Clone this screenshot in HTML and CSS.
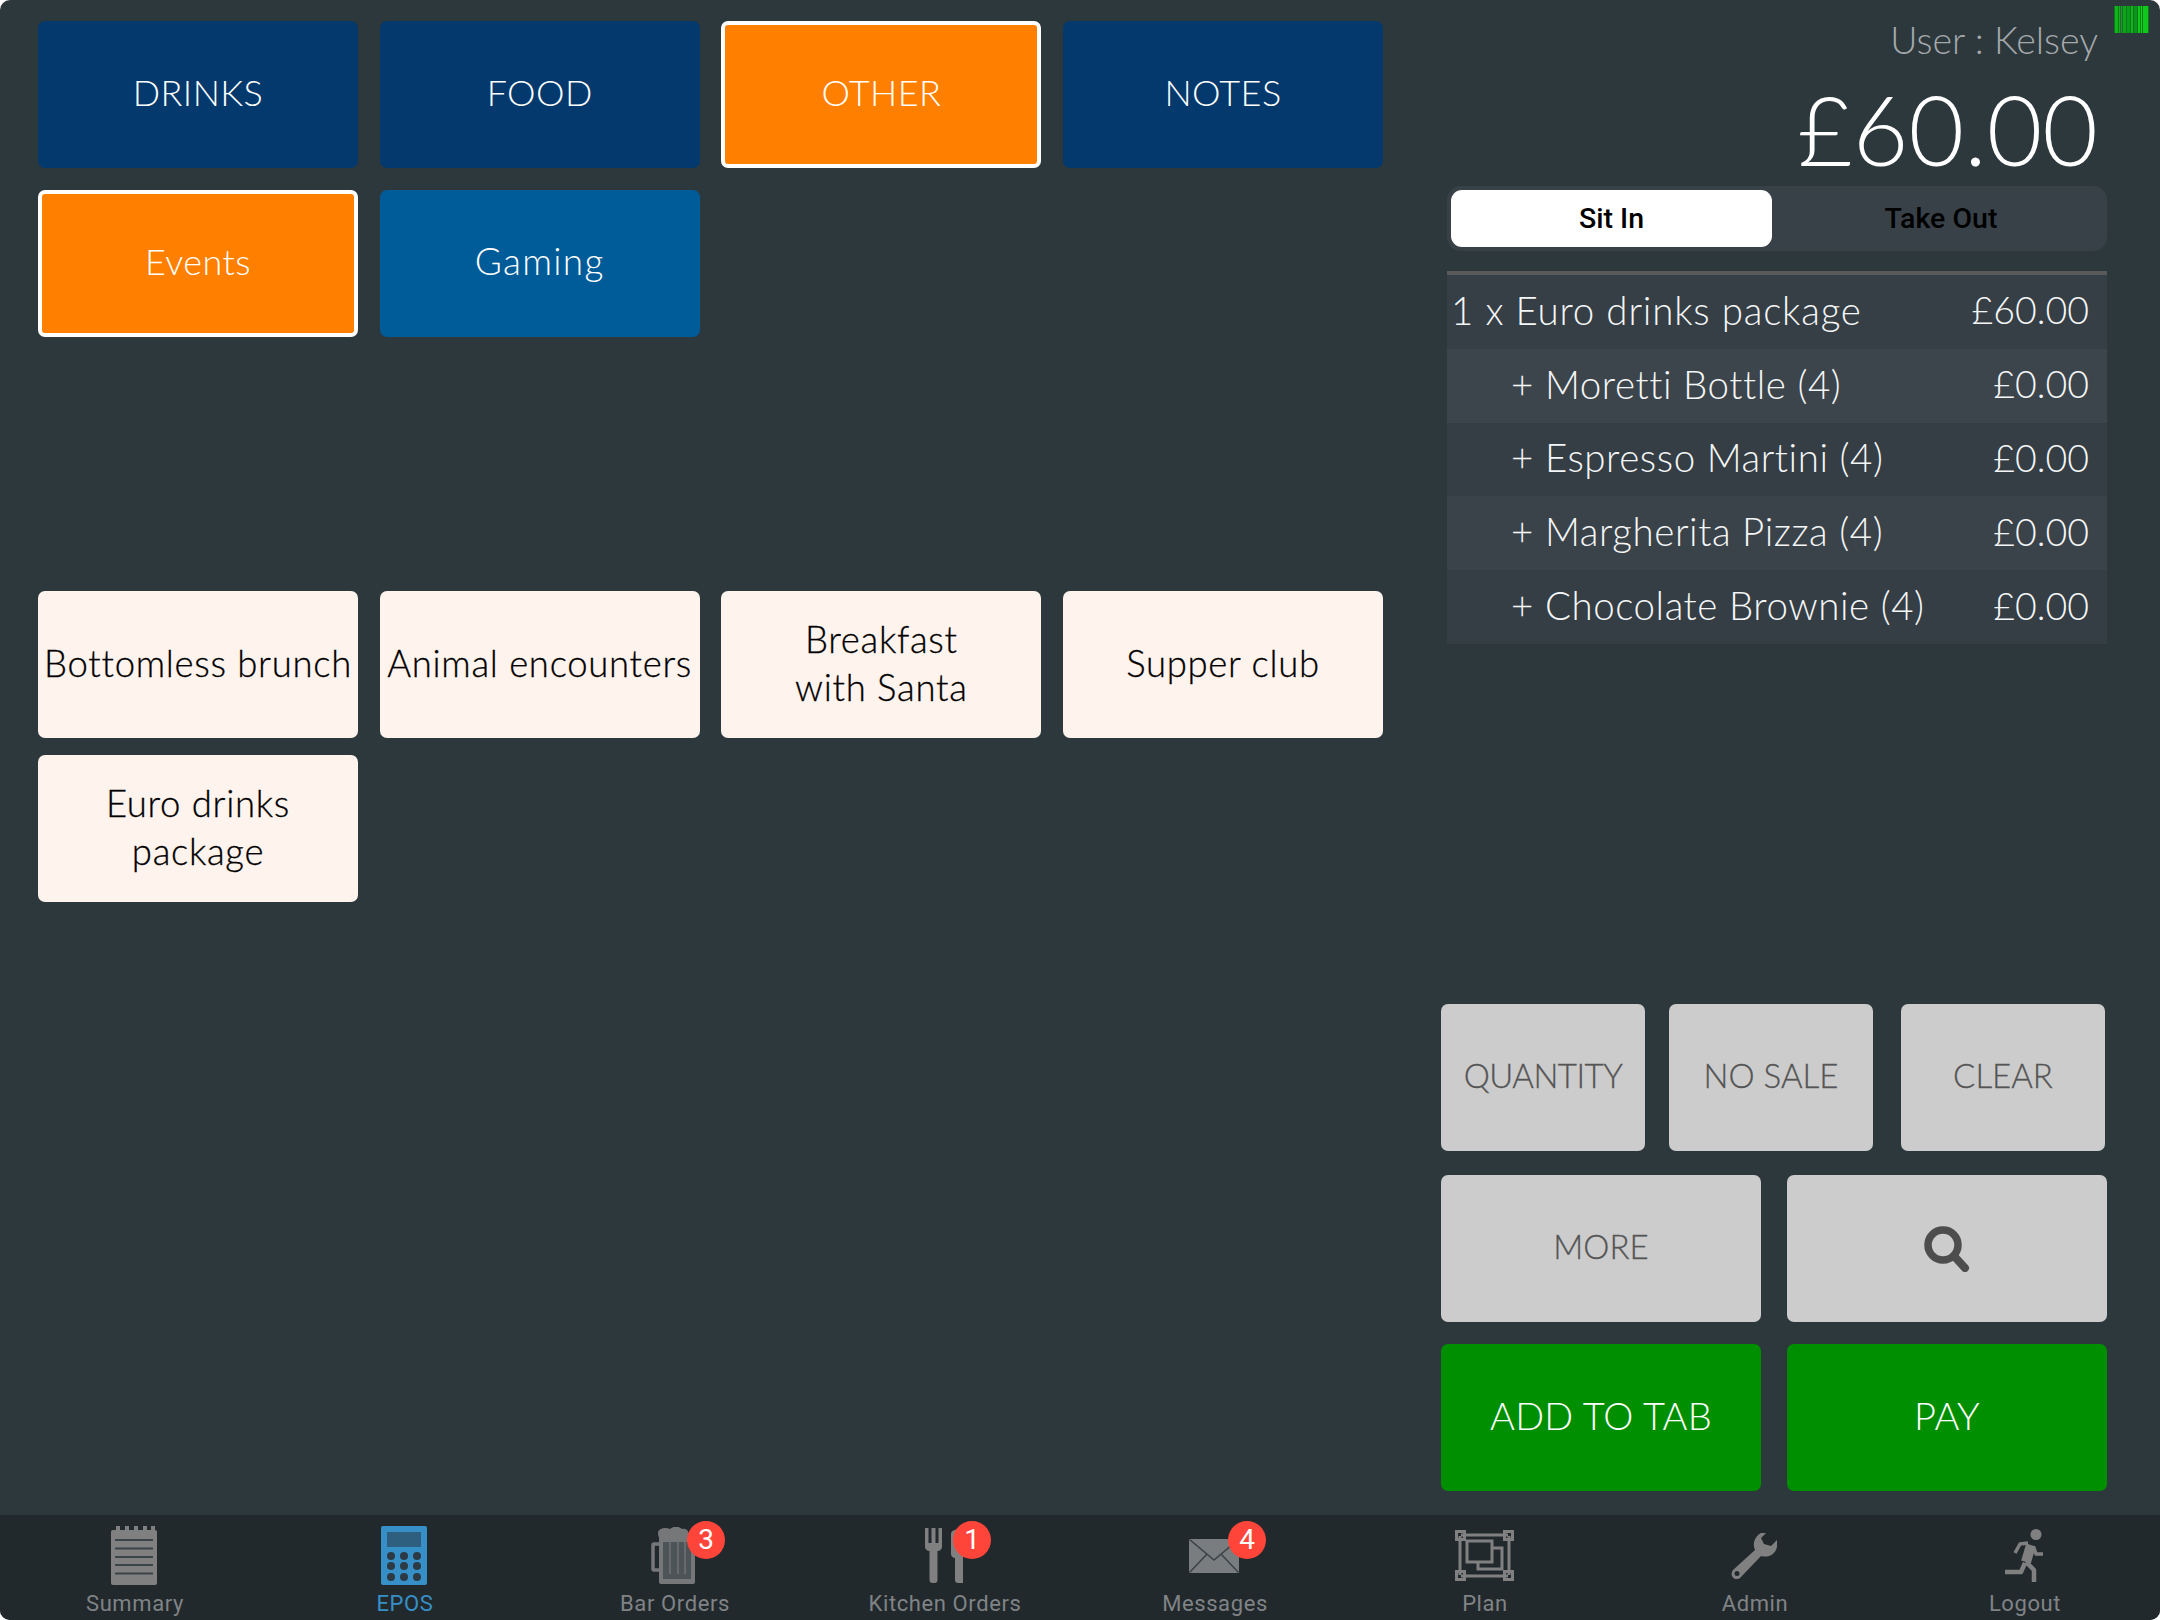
FILE: index.html
```html
<!DOCTYPE html>
<html lang="en">
<head>
<meta charset="utf-8">
<title>EPOS</title>
<link rel="stylesheet" href="styles.css">
</head>
<body>
<div class="app">
  <svg class="signal" viewBox="0 0 35 27" aria-hidden="true">
    <rect width="35" height="27" fill="#0b7a1c"/>
    <rect x="1" width="3" height="27" fill="#0fb51a"/><rect x="5" width="1" height="27" fill="#0fb51a"/>
    <rect x="7" width="1" height="27" fill="#4a7a4a"/><rect x="9" width="3" height="27" fill="#0fa51a"/>
    <rect x="13" width="3" height="27" fill="#0c9a1c"/><rect x="17" width="2" height="27" fill="#0fb51a"/>
    <rect x="20" width="3" height="27" fill="#0c951c"/><rect x="24" width="2" height="27" fill="#10c81a"/>
    <rect x="27" width="1" height="27" fill="#10d81a"/><rect x="29" width="5" height="27" fill="#10c81a"/>
  </svg>
  <main class="main">
    <section class="menu">
      <div class="grid categories">
        <button class="tile navy">DRINKS</button>
        <button class="tile navy">FOOD</button>
        <button class="tile orange">OTHER</button>
        <button class="tile navy">NOTES</button>
        <button class="tile orange">Events</button>
        <button class="tile blue">Gaming</button>
      </div>
      <div class="grid products">
        <button class="tile cream">Bottomless brunch</button>
        <button class="tile cream">Animal encounters</button>
        <button class="tile cream">Breakfast<br>with Santa</button>
        <button class="tile cream">Supper club</button>
        <button class="tile cream">Euro drinks<br>package</button>
      </div>
    </section>
    <section class="order">
      <div class="user">User : Kelsey</div>
      <div class="total">£60.00</div>
      <div class="segments">
        <div class="segment active">Sit In</div>
        <div class="segment">Take Out</div>
      </div>
      <ul class="lines">
        <li class="line tone-a"><span class="name first">1 x Euro drinks package</span><span>£60.00</span></li>
        <li class="line sub tone-b"><span class="name">+ Moretti Bottle (4)</span><span>£0.00</span></li>
        <li class="line sub tone-c"><span class="name">+ Espresso Martini (4)</span><span>£0.00</span></li>
        <li class="line sub tone-d"><span class="name">+ Margherita Pizza (4)</span><span>£0.00</span></li>
        <li class="line sub tone-c"><span class="name">+ Chocolate Brownie (4)</span><span>£0.00</span></li>
      </ul>
      <div class="actions">
        <div class="action-row three">
          <button class="tile grey tight">QUANTITY</button>
          <button class="tile grey">NO SALE</button>
          <button class="tile grey clear">CLEAR</button>
        </div>
        <div class="action-row two">
          <button class="tile grey">MORE</button>
          <button class="tile grey glyph" aria-label="Search">
            <svg class="search" viewBox="0 0 46 46"><circle cx="19" cy="19" r="15" fill="none" stroke="#4d4d4d" stroke-width="7.5"/><path d="M30 30 L41 42" stroke="#4d4d4d" stroke-width="8" stroke-linecap="round"/></svg>
          </button>
        </div>
        <div class="action-row two">
          <button class="tile green">ADD TO TAB</button>
          <button class="tile green">PAY</button>
        </div>
      </div>
    </section>
  </main>
  <nav class="tabs">
    <div class="tab">
      <div class="icon">
        <svg width="46" height="59" viewBox="0 0 46 59">
          <path d="M5 0h4v5H5zM14 0h4v5h-4zM23 0h4v5h-4zM32 0h4v5h-4zM40 0h4v5h-4z" fill="#808080"/>
          <rect y="4" width="46" height="55" rx="2" fill="#808080"/>
          <path d="M4 14h38M4 22.500h38M4 31h38M4 39h38M4 47.500h38" stroke="#3a4347" stroke-width="2"/>
        </svg>
      </div>
      <span class="label">Summary</span>
    </div>
    <div class="tab current">
      <div class="icon">
        <svg width="46" height="59" viewBox="0 0 46 59">
          <rect width="46" height="59" rx="2" fill="#368fc6"/>
          <rect x="6" y="6" width="34" height="15" fill="#2f5f7e"/>
          <g fill="#2b3a44">
            <circle cx="10" cy="30" r="4"/><circle cx="23" cy="30" r="4"/><circle cx="36" cy="30" r="4"/>
            <circle cx="10" cy="40" r="4"/><circle cx="23" cy="40" r="4"/><circle cx="36" cy="40" r="4"/>
            <circle cx="10" cy="51" r="4"/><circle cx="23" cy="51" r="4"/><circle cx="36" cy="51" r="4"/>
          </g>
        </svg>
      </div>
      <span class="label">EPOS</span>
    </div>
    <div class="tab">
      <div class="icon">
        <svg class="beer" width="44" height="57" viewBox="0 0 44 57">
          <rect x="2" y="17" width="8" height="26" rx="1" fill="none" stroke="#757779" stroke-width="3.500"/>
          <rect x="8" y="8" width="36" height="49" rx="2" fill="#757779"/>
          <path d="M7 6c0-5 8-6 12-4 3-3 9-3 12 0 5-1 8 3 6 8 0 4-6 4-9 3-3 2-8 2-10 0-4 2-11 1-11-7z" fill="#757779"/>
          <rect x="12" y="15" width="28" height="37" fill="#4c5457"/>
          <path d="M19 15v32M27 15v32M34 15v32" stroke="#686b6d" stroke-width="2"/>
        </svg>
        <span class="badge badge-bar">3</span>
      </div>
      <span class="label">Bar Orders</span>
    </div>
    <div class="tab">
      <div class="icon">
        <svg width="38" height="55" viewBox="0 0 38 55">
          <path d="M0 0h3.500v15h3V0h4v15h3V0H17v19c0 2-2 4-4.500 4V52a3 3 0 0 1-3 3h-2a3 3 0 0 1-3-3V23C2 23 0 21 0 19z" fill="#808080"/>
          <path d="M26 6c0-3 3-5 12-5v54h-5a3 3 0 0 1-3-3V30c-2 0-4-2-4-4z" fill="#808080"/>
        </svg>
        <span class="badge badge-kitchen">1</span>
      </div>
      <span class="label">Kitchen Orders</span>
    </div>
    <div class="tab">
      <div class="icon">
        <svg width="50" height="34" viewBox="0 0 50 34">
          <rect width="50" height="34" fill="#7a7d80"/>
          <path d="M0.500 0.500L25 21 49.500 0.500M0.500 33.500L18 15M49.500 33.500L32 15" fill="none" stroke="#3b4246" stroke-width="1.500"/>
        </svg>
        <span class="badge badge-messages">4</span>
      </div>
      <span class="label">Messages</span>
    </div>
    <div class="tab">
      <div class="icon">
        <svg width="59" height="51" viewBox="0 0 59 51">
          <g fill="none" stroke="#808080" stroke-width="3">
            <path d="M5 6V45M54 6V45M6 5H53M6 46H53"/>
            <rect x="1.500" y="1.500" width="8" height="8"/><rect x="49.500" y="1.500" width="8" height="8"/>
            <rect x="1.500" y="41.500" width="8" height="8"/><rect x="49.500" y="41.500" width="8" height="8"/>
            <path d="M37 18H47V39H23V32"/>
            <rect x="12" y="11" width="25" height="21"/>
          </g>
        </svg>
      </div>
      <span class="label">Plan</span>
    </div>
    <div class="tab">
      <div class="icon">
        <svg width="46" height="46" viewBox="0 0 46 46">
          <path d="M30 0C24 3 21 11 24 17L2 37C-1 41 1 46 6 46 8 46 9 45 10 44L30 23C37 25 44 22 46 14L46 7 40 13 33 11 30 5 35 0Z" fill="#808080"/>
          <circle cx="6" cy="40.500" r="2.500" fill="#22292c"/>
        </svg>
      </div>
      <span class="label">Admin</span>
    </div>
    <div class="tab">
      <div class="icon">
        <svg width="38" height="53" viewBox="0 0 38 53">
          <circle cx="31" cy="5.500" r="5.500" fill="#808080"/>
          <g fill="none" stroke="#808080" stroke-linejoin="round">
            <path d="M26 16L21 33" stroke-width="10"/>
            <path d="M23 14L15 15 10 24" stroke-width="3.500"/>
            <path d="M29 19L31 25H38" stroke-width="3.500"/>
            <path d="M20 34L16 43H0" stroke-width="4.500"/>
            <path d="M21 33L29 41V53" stroke-width="4.500"/>
          </g>
        </svg>
      </div>
      <span class="label">Logout</span>
    </div>
  </nav>
</div>
</body>
</html>
```

FILE: styles.css
```css
* { box-sizing: border-box; }
html, body { margin: 0; padding: 0; background: #fff; }
body { width: 2160px; height: 1620px; overflow: hidden; font-family: "Lato", "Open Sans", sans-serif; }
.app { position: relative; width: 2160px; height: 1620px; display: flex; flex-direction: column; background: #2d383d; border-radius: 10px; overflow: hidden; }
.signal { position: absolute; top: 6px; left: 2114px; width: 35px; height: 27px; }
.main { flex: 0 0 1515px; display: flex; }
.menu { width: 1441px; padding: 21px 0 0 38px; }
.grid { width: 1345px; display: grid; grid-template-columns: repeat(4, 320px); column-gap: 21.67px; }
.categories { grid-auto-rows: 147px; row-gap: 22px; }
.products { grid-auto-rows: 147px; row-gap: 17px; margin-top: 254px; }
.tile { display: flex; align-items: center; justify-content: center; padding: 0 0 5px; border: 0; border-radius: 7px; font-family: inherit; font-size: 36px; font-weight: 300; line-height: 48px; text-align: center; color: #fff; letter-spacing: 0.400px; }
.navy { background: #03396c; }
.blue { background: #005b99; font-size: 37px; letter-spacing: 1.300px; }
.orange { background: #ff8000; border: 4px solid #fff; }
.cream { background: #fff3ed; color: #000; padding-bottom: 3px; font-size: 36.500px; font-weight: 300; letter-spacing: 0.700px; -webkit-text-stroke: 0.300px #000; }
.grey { background: #ccc; color: #555; font-size: 33px; letter-spacing: 0; -webkit-text-stroke: 0.300px #555; }
.grey.tight { letter-spacing: -0.500px; }
.grey.glyph { padding: 0; }
.green { background: #008f00; font-size: 38px; letter-spacing: 0.200px; }
.order { width: 666px; display: flex; flex-direction: column; }
.user { height: 66px; padding: 18px 9px 0 0; text-align: right; color: #a5a9ab; font-size: 37.500px; font-weight: 300; line-height: 44px; }
.total { height: 120px; padding-right: 9px; text-align: right; color: #fff; font-size: 96px; font-weight: 300; line-height: 126px; }
.segments { width: 660px; height: 65px; margin-left: 6px; padding: 4px; display: flex; background: #384148; border-radius: 14px; }
.segment { flex: 1 1 0; display: flex; align-items: center; justify-content: center; color: #000; font-family: "Roboto", sans-serif; font-size: 28.500px; font-weight: 500; }
.segment:not(.active) { padding-left: 7px; }
.segment.active { flex: 0 0 321px; background: #fff; border-radius: 11px; }
.lines { list-style: none; width: 660px; margin: 20px 0 0 6px; padding: 0; border-top: 4px solid #5a5a5a; }
.line { height: 73.800px; display: flex; align-items: center; justify-content: space-between; padding: 0 18px 4px 4px; color: #f5f6f7; font-size: 37.500px; font-weight: 300; }
.line .name { font-size: 38.500px; letter-spacing: 0.550px; }
.line .name.first { letter-spacing: 0.800px; }
.line.sub { padding-left: 64px; }
.tone-a { background: #353f45; }
.tone-b { background: #3c454b; }
.tone-c { background: #343e44; }
.tone-d { background: #3a4349; }
.actions { margin-top: auto; padding-bottom: 24px; display: flex; flex-direction: column; row-gap: 22px; }
.action-row { display: flex; height: 147px; }
.action-row.three { column-gap: 24px; margin-bottom: 2px; }
.action-row.three .tile { width: 204px; }
.action-row.three .clear { margin-left: 4px; }
.action-row.two { column-gap: 26px; }
.action-row.two .tile { width: 320px; }
.search { width: 46px; height: 46px; }
.tabs { flex: 0 0 105px; display: grid; grid-template-columns: repeat(8, 270px); background: #22292c; }
.tab { display: flex; flex-direction: column; align-items: center; color: #808386; }
.tab.current { color: #368fc6; }
.icon { position: relative; width: 100%; height: 59px; margin-top: 11px; display: flex; align-items: center; justify-content: center; }
.icon svg { margin-right: 2px; }
.icon svg.beer { margin-right: 4px; }
.badge { position: absolute; top: -5px; width: 38px; height: 38px; border-radius: 50%; background: #ff453a; color: #fff; font-family: "Roboto", sans-serif; font-size: 28px; line-height: 38px; text-align: center; }
.badge-bar { left: calc(50% + 12px); }
.badge-kitchen { left: calc(50% + 8px); }
.badge-messages { left: calc(50% + 13px); }
.label { margin-top: 7px; font-family: "Roboto", sans-serif; font-size: 22px; line-height: 24px; letter-spacing: 0.600px; }
```
